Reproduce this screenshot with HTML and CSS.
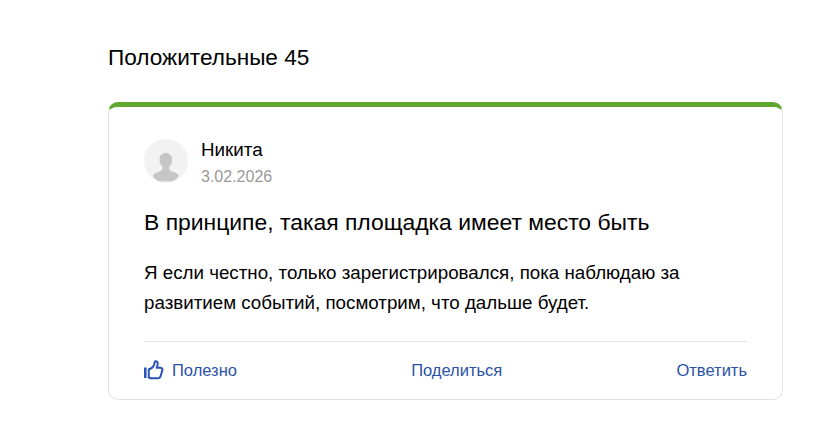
FILE: index.html
```html
<!DOCTYPE html>
<html lang="ru">
<head>
    <meta charset="UTF-8">
    <title>Отзывы</title>
    <link rel="stylesheet" href="styles.css">
</head>
<body>
    <div class="reviews">
        <h2 class="reviews-title">Положительные 45</h2>
        <div class="review-card">
            <div class="review-author">
                <div class="avatar">
                    <svg width="44" height="44" viewBox="0 0 44 44">
                        <circle cx="22" cy="22" r="22" fill="#f2f2f2"/>
                        <path d="M22 14c-3.800 0-6.500 2.400-6.500 6.200 0 3 .9 5.900 2.900 7.600v2.400c-.4 1.500-2.900 2.200-5.100 3.100-2.300 1-4 2-4.500 3.500 1.500 2.600 3.600 4.300 6.200 5.400.8.200 12.800.2 13.600 0 2.600-1.100 4.700-2.800 6.200-5.400-.5-1.500-2.200-2.500-4.500-3.500-2.200-.9-4.700-1.600-5.100-3.100v-2.400c2-1.700 2.900-4.600 2.900-7.600 0-3.800-2.700-6.200-6.500-6.200z" fill="#c6c6c6"/>
                    </svg>
                </div>
                <div class="author-info">
                    <div class="author-name">Никита</div>
                    <div class="review-date">3.02.2026</div>
                </div>
            </div>
            <div class="review-head">В принципе, такая площадка имеет место быть</div>
            <p class="review-text">Я если честно, только зарегистрировался, пока наблюдаю за развитием событий, посмотрим, что дальше будет.</p>
            <div class="review-actions">
                <a class="action action-like" href="#">
                    <svg width="20" height="20" viewBox="0 0 20 20" fill="none" stroke="#2a55b5" stroke-width="2">
                        <path d="M1.300 7.500v10.500" stroke-width="2.600"/>
                        <path d="M4.800 9.200c2 0 3.500-1.500 4.800-3.300 1-1.400 1.100-2.600 1.100-3.900 0-1.200 2.900-1.100 3.100 1.400.1 1.600-.6 3-1.200 4.400h3.800c1.700 0 2.300 1.400 1.900 2.600l-1.900 6.300c-.4 1.100-1.200 1.600-2.300 1.600H7.500c-1 0-1.900-.4-2.700-.8z" stroke-linejoin="round"/>
                    </svg>
                    <span>Полезно</span>
                </a>
                <a class="action" href="#">Поделиться</a>
                <a class="action" href="#">Ответить</a>
            </div>
        </div>
    </div>
</body>
</html>
```

FILE: styles.css
```css
body {
    margin: 0;
    font-family: 'Liberation Sans', Arial, sans-serif;
    background: #fff;
    color: #000;
}

.reviews {
    width: 675px;
    margin-left: 108px;
    padding-top: 45px;
}

.reviews-title {
    margin: 0 0 31px;
    font-size: 22.6px;
    line-height: 26px;
    font-weight: normal;
}

.review-card {
    box-sizing: border-box;
    height: 298px;
    padding: 32px 35px 0;
    border: 1px solid #e3e3e3;
    border-top: 5px solid #5fa72f;
    border-radius: 10px;
}

.review-author {
    display: flex;
    gap: 13px;
}

.avatar {
    width: 44px;
    height: 44px;
}

.author-name {
    font-size: 18.8px;
    line-height: 22px;
}

.review-date {
    margin-top: 6px;
    font-size: 16px;
    line-height: 20px;
    color: #999;
}

.review-head {
    margin-top: 21px;
    font-size: 22.9px;
    line-height: 28px;
}

.review-text {
    margin: 22px 0 0;
    font-size: 18.75px;
    line-height: 30px;
}

.review-actions {
    display: flex;
    justify-content: space-between;
    align-items: center;
    margin-top: 23px;
    padding-top: 18px;
    border-top: 1px solid #e3e3e3;
}

.action {
    display: flex;
    align-items: center;
    gap: 8px;
    font-size: 16.5px;
    line-height: 20px;
    color: #2a52a8;
    text-decoration: none;
}
```
